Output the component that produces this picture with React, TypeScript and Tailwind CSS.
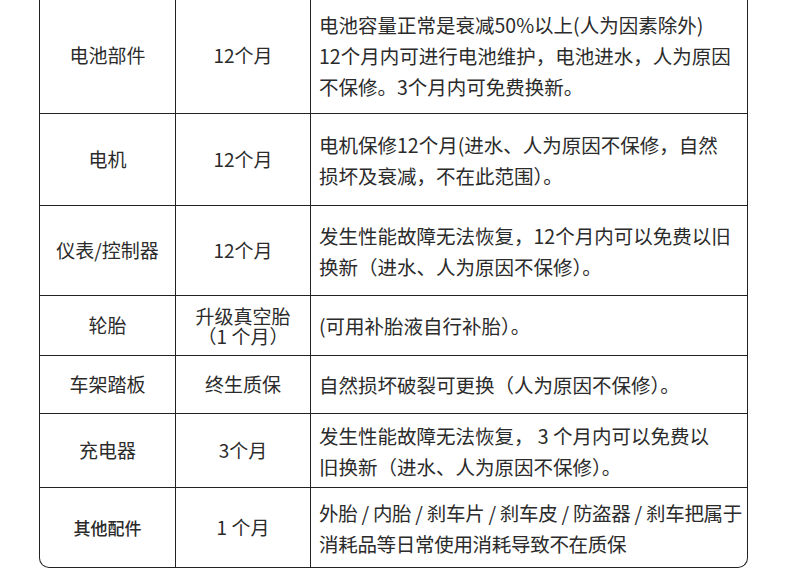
import React from "react";

interface Row {
  part: React.ReactNode;
  term: React.ReactNode;
  lines: string[];
  h: string;
  partClass?: string;
  lineClass?: string;
}

const rows: Row[] = [
  {
    part: "电池部件",
    term: "12个月",
    lines: [
      "电池容量正常是衰减50%以上(人为因素除外)",
      "12个月内可进行电池维护，电池进水，人为原因",
      "不保修。3个月内可免费换新。",
    ],
    h: "h-[117px]",
  },
  {
    part: "电机",
    term: "12个月",
    lines: ["电机保修12个月(进水、人为原因不保修，自然", "损坏及衰减，不在此范围）。"],
    h: "h-[92px]",
  },
  {
    part: "仪表/控制器",
    term: "12个月",
    lines: ["发生性能故障无法恢复，12个月内可以免费以旧", "换新（进水、人为原因不保修）。"],
    h: "h-[90px]",
  },
  {
    part: "轮胎",
    term: (
      <span className="leading-[20px]">
        升级真空胎
        <br />
        （1 个月）
      </span>
    ),
    lines: ["(可用补胎液自行补胎）。"],
    h: "h-[60px]",
  },
  {
    part: "车架踏板",
    term: "终生质保",
    lines: ["自然损坏破裂可更换（人为原因不保修）。"],
    h: "h-[58px]",
  },
  {
    part: "充电器",
    term: "3个月",
    lines: ["发生性能故障无法恢复， 3 个月内可以免费以", "旧换新（进水、人为原因不保修）。"],
    h: "h-[74px]",
  },
  {
    part: "其他配件",
    term: "1 个月",
    lines: [
      "外胎 / 内胎 / 刹车片 / 刹车皮 / 防盗器 / 刹车把属于",
      "消耗品等日常使用消耗导致不在质保",
    ],
    h: "h-[79px]",
    partClass: "text-[17px] font-medium",
    lineClass: "tracking-[-0.3px]",
  },
];

export default function App() {
  return (
    <div
      className="w-[790px] h-[582px] overflow-hidden bg-white text-[#2b2b2b]"
      style={{ fontFamily: '"Noto Sans CJK SC", "Noto Sans", sans-serif' }}
    >
      <div className="ml-[39px] -mt-[3px] w-[709px] border-x border-b border-[#222] rounded-b-[10px] overflow-hidden">
        {rows.map((r, i) => (
          <div
            key={i}
            className={`grid grid-cols-[136px_135px_1fr] ${r.h} ${
              i < rows.length - 1 ? "border-b border-[#222]" : ""
            }`}
          >
            <div
              className={`flex items-center justify-center border-r border-[#222] text-center ${
                r.partClass ?? "text-[19px]"
              }`}
            >
              {r.part}
            </div>
            <div className="flex items-center justify-center border-r border-[#222] text-center text-[19px]">
              {r.term}
            </div>
            <div
              className={`flex flex-col justify-center pl-[8px] text-[19.5px] leading-[31px] whitespace-nowrap ${
                r.lineClass ?? ""
              }`}
            >
              {r.lines.map((l, j) => (
                <div key={j}>{l}</div>
              ))}
            </div>
          </div>
        ))}
      </div>
    </div>
  );
}
